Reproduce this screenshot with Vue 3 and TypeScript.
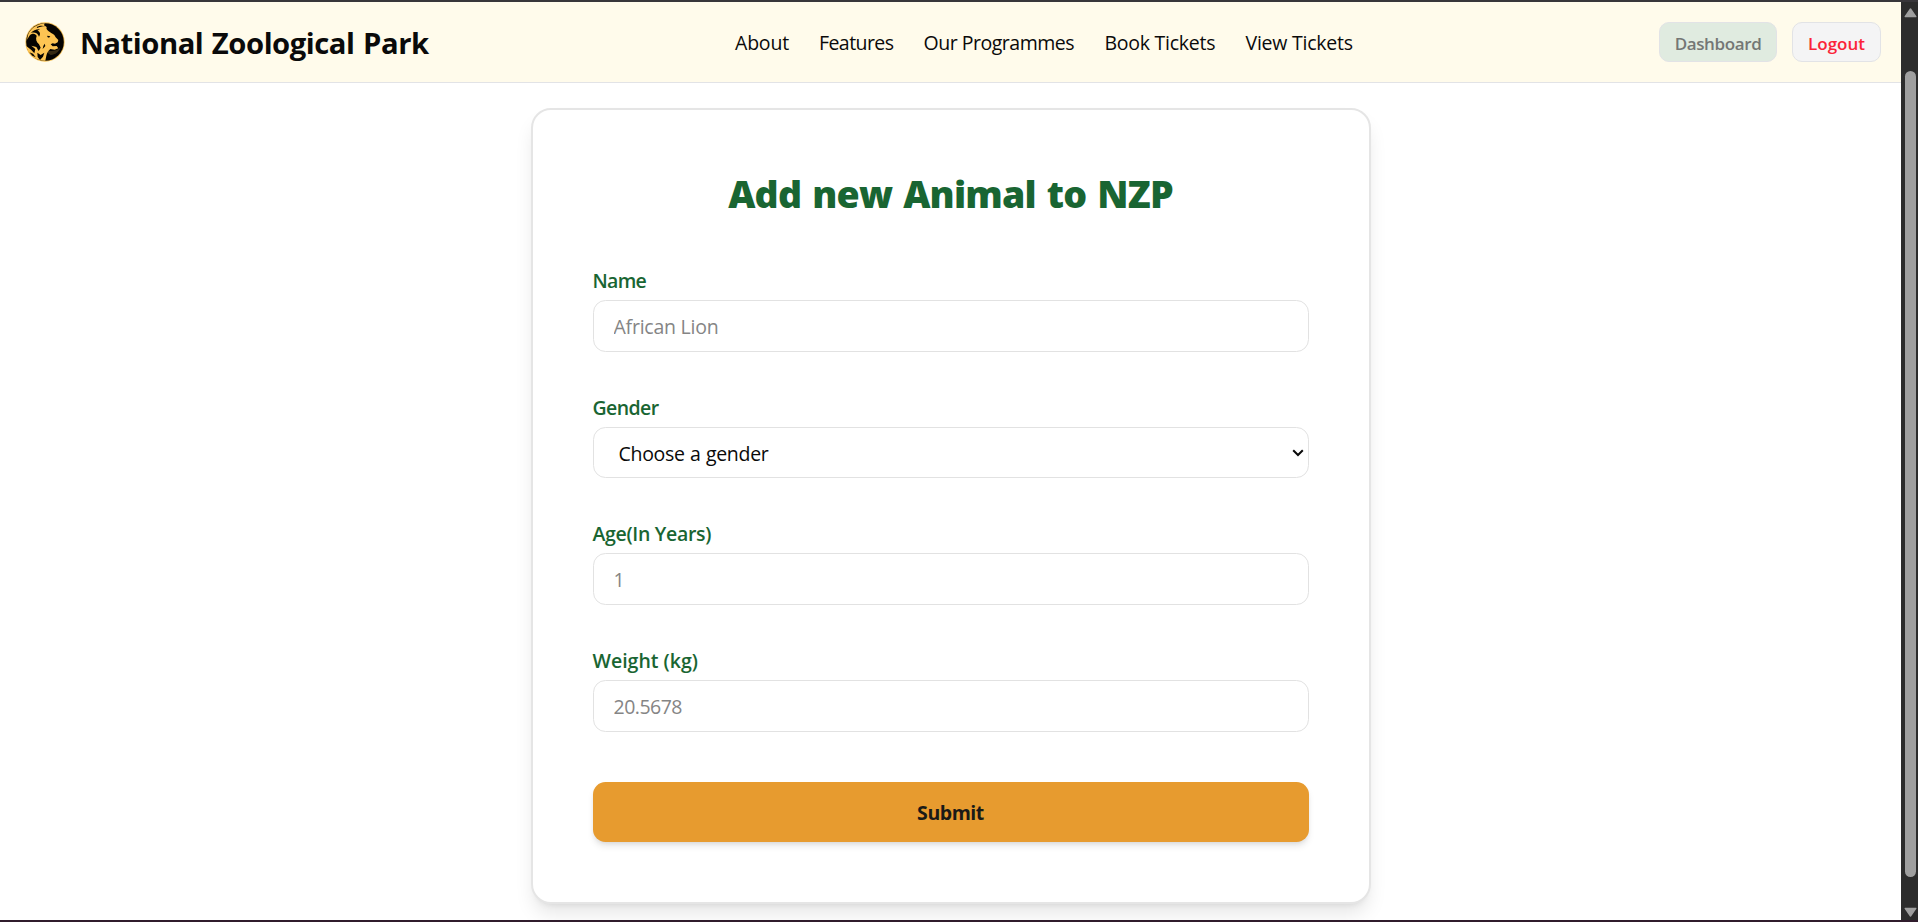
<script setup lang="ts">
import { reactive } from 'vue'

interface NavLink {
  id: string
  label: string
}

const links: NavLink[] = [
  { id: 'about', label: 'About' },
  { id: 'features', label: 'Features' },
  { id: 'programmes', label: 'Our Programmes' },
  { id: 'book', label: 'Book Tickets' },
  { id: 'view', label: 'View Tickets' },
]

const animal = reactive({ name: '', gender: '', age: '', weight: '' })
</script>

<template>
  <div class="window">
    <div class="page">
      <header class="header">
        <div class="brand">
          <svg class="logo" viewBox="0 0 126 126" aria-hidden="true">
            <circle cx="63" cy="63" r="59" fill="#f2bd52" />
            <circle cx="63" cy="63" r="56.5" fill="#060402" />
            <path
              fill="#fdc453"
              d="M12 42C18 24 38 9 62 7L60 13L68 18C66 23 69 27 74 31C80 36 86 38 91 42L95 49L103 57L101 64L93 68L86 67L80 70L86 76L98 75L103 82L92 86L79 84C72 90 69 96 67 104L64 119C44 120 22 110 12 91L6 74L22 87L31 97L34 84L22 74L37 78L44 90L50 80L45 70C37 63 34 54 38 45C35 38 27 35 18 42L9 56Z"
            />
            <path
              fill="#060402"
              d="M20 36C27 28 38 24 48 25L40 29C48 31 51 38 45 47C42 37 32 32 20 36ZM38 18C48 13 56 13 64 16C54 16 46 18 40 21ZM70 44L79 46L75 50L70 48ZM62 68L64 75L56 84L58 75ZM40 95L50 102L61 95L57 107L48 117L41 108ZM16 94L27 98L35 109L25 104Z"
            />
            <path fill="#fdc453" d="M67 88C82 92 97 90 109 80C105 92 94 101 80 102C73 98 69 95 67 88Z" opacity="0.2" />
          </svg>
          <span class="brand-name">National Zoological Park</span>
        </div>
        <nav class="nav">
          <a v-for="link in links" :key="link.id" class="nav-link" :class="link.id">{{ link.label }}</a>
        </nav>
        <div class="actions">
          <button type="button" class="action dashboard">Dashboard</button>
          <button type="button" class="action logout">Logout</button>
        </div>
      </header>

      <main class="main">
        <form class="card" @submit.prevent>
          <h1 class="title">Add new Animal to NZP</h1>
          <div class="fields">
            <div class="field">
              <label class="label label-name" for="name">Name</label>
              <input id="name" v-model="animal.name" class="control name" type="text" placeholder="African Lion" />
            </div>
            <div class="field">
              <label class="label label-gender" for="gender">Gender</label>
              <div class="select-wrap">
                <select id="gender" v-model="animal.gender" class="control select">
                  <option value="">Choose a gender</option>
                  <option value="male">Male</option>
                  <option value="female">Female</option>
                </select>
                <svg class="chevron" viewBox="0 0 12 8" aria-hidden="true">
                  <path d="M1.2 1.3L6 6L10.8 1.3" fill="none" stroke="#0a0a0a" stroke-width="2" />
                </svg>
              </div>
            </div>
            <div class="field">
              <label class="label label-age" for="age">Age(In Years)</label>
              <input id="age" v-model="animal.age" class="control" type="text" placeholder="1" />
            </div>
            <div class="field">
              <label class="label label-weight" for="weight">Weight (kg)</label>
              <input id="weight" v-model="animal.weight" class="control weight" type="text" placeholder="20.5678" />
            </div>
          </div>
          <button type="submit" class="submit">Submit</button>
        </form>
      </main>
    </div>

    <div class="scrollbar" aria-hidden="true">
      <svg class="arrow" viewBox="0 0 13 10"><path d="M6.5 1L11.8 8.6H1.2Z" fill="#9f9f9f" stroke="#9f9f9f" stroke-width="1.4" stroke-linejoin="round" /></svg>
      <div class="thumb"></div>
      <svg class="arrow" viewBox="0 0 13 10"><path d="M6.5 9L11.8 1.4H1.2Z" fill="#9f9f9f" stroke="#9f9f9f" stroke-width="1.4" stroke-linejoin="round" /></svg>
    </div>
  </div>
</template>

<style>
body {
  margin: 0;
  overflow: hidden;
}
</style>

<style scoped>
.window {
  box-sizing: border-box;
  display: grid;
  grid-template-columns: 1fr 17px;
  height: 922px;
  border-top: 2px solid #38363a;
  border-bottom: 2px solid #301c2c;
  background: #fff;
  color: #0a0a0a;
  font-family: 'Open Sans', 'Noto Sans', sans-serif;
  font-size: 19.5px;
  overflow: hidden;
}

.page {
  min-width: 0;
  height: 918px;
  overflow: hidden;
}

.header {
  box-sizing: border-box;
  display: grid;
  grid-template-columns: 735px 1fr auto;
  align-items: center;
  height: 81px;
  padding-right: 20px;
  background: #fffbeb;
  border-bottom: 1px solid #e2e3e6;
}

.brand {
  display: flex;
  align-items: center;
  gap: 14px;
  padding-left: 24px;
}

.logo {
  flex: none;
  width: 42px;
  height: 42px;
}

.brand-name {
  padding-top: 1px;
  font-size: 29.25px;
  font-weight: 700;
  line-height: 40px;
  letter-spacing: -0.46px;
  word-spacing: 1.4px;
  white-space: nowrap;
}

.nav {
  display: flex;
  gap: 30px;
  padding-top: 2px;
  line-height: 30px;
  white-space: nowrap;
}

.about {
  width: 54px;
  letter-spacing: -0.2px;
}

.features {
  width: 74.5px;
  letter-spacing: -0.57px;
}

.programmes {
  width: 151px;
  letter-spacing: -0.48px;
}

.book {
  width: 111px;
  letter-spacing: -0.25px;
}

.view {
  width: 107px;
  letter-spacing: -0.24px;
}

.actions {
  display: flex;
  gap: 15px;
}

.action {
  box-sizing: border-box;
  height: 40px;
  padding: 2px 0 0;
  border: 1px solid #e2e3e6;
  border-radius: 10px;
  font-family: inherit;
  font-size: 17px;
  font-weight: 600;
  white-space: nowrap;
}

.dashboard {
  width: 118px;
  background: #e0ebe0;
  color: #747775;
  letter-spacing: -0.38px;
}

.logout {
  width: 89px;
  background: #f4f4f5;
  color: #fb2439;
}

.main {
  display: flex;
  justify-content: center;
  padding-top: 25px;
}

.card {
  box-sizing: border-box;
  width: 840px;
  padding: 60px;
  border: 2px solid #e5e5e5;
  border-radius: 20px;
  background: #fff;
  box-shadow:
    0 12.5px 18.75px -3.75px rgba(0, 0, 0, 0.1),
    0 5px 7.5px -5px rgba(0, 0, 0, 0.1);
}

.title {
  margin: 0 0 49px;
  color: #196532;
  font-size: 37.5px;
  font-weight: 800;
  line-height: 47px;
  letter-spacing: -0.8px;
  word-spacing: 2px;
  text-align: center;
}

.fields {
  display: flex;
  flex-direction: column;
  gap: 41px;
}

.field {
  display: flex;
  flex-direction: column;
  gap: 4px;
}

.label {
  color: #196532;
  font-weight: 600;
  line-height: 30px;
}

.label-name {
  letter-spacing: -0.7px;
}

.label-gender {
  letter-spacing: -0.58px;
}

.label-age {
  letter-spacing: -0.32px;
}

.control {
  box-sizing: border-box;
  display: block;
  width: 100%;
  height: 52px;
  margin: 0;
  padding: 0 20px;
  border: 1px solid #e2e2e2;
  border-radius: 12.5px;
  outline: none;
  background: #fff;
  color: #0a0a0a;
  font-family: inherit;
  font-size: 19.5px;
}

.control::placeholder {
  color: #858585;
  opacity: 1;
}

.name {
  letter-spacing: -0.24px;
}

.weight {
  letter-spacing: -0.5px;
}

.select-wrap {
  position: relative;
}

.select {
  height: 51px;
  padding: 2px 24px 0 25px;
  appearance: none;
  letter-spacing: -0.3px;
  word-spacing: 0.6px;
}

.chevron {
  position: absolute;
  top: 22px;
  right: 5px;
  width: 12px;
  height: 8px;
  pointer-events: none;
}

.submit {
  display: block;
  width: 100%;
  height: 60px;
  margin-top: 50px;
  padding: 0;
  border: 0;
  border-radius: 12.5px;
  background: #e79b2f;
  box-shadow:
    0 5px 7.5px -1.25px rgba(0, 0, 0, 0.1),
    0 2.5px 5px -2.5px rgba(0, 0, 0, 0.1);
  color: #1a1a17;
  font-family: inherit;
  font-size: 19.5px;
  font-weight: 700;
  letter-spacing: -0.45px;
}

.scrollbar {
  box-sizing: border-box;
  display: flex;
  flex-direction: column;
  align-items: center;
  height: 918px;
  padding: 6px 0 3px 1px;
  background: #2c2c2c;
}

.arrow {
  flex: none;
  width: 13px;
  height: 10px;
}

.thumb {
  width: 11px;
  height: 806px;
  margin: 53px 0 auto;
  border-radius: 6px;
  background: #9f9f9f;
}
</style>
